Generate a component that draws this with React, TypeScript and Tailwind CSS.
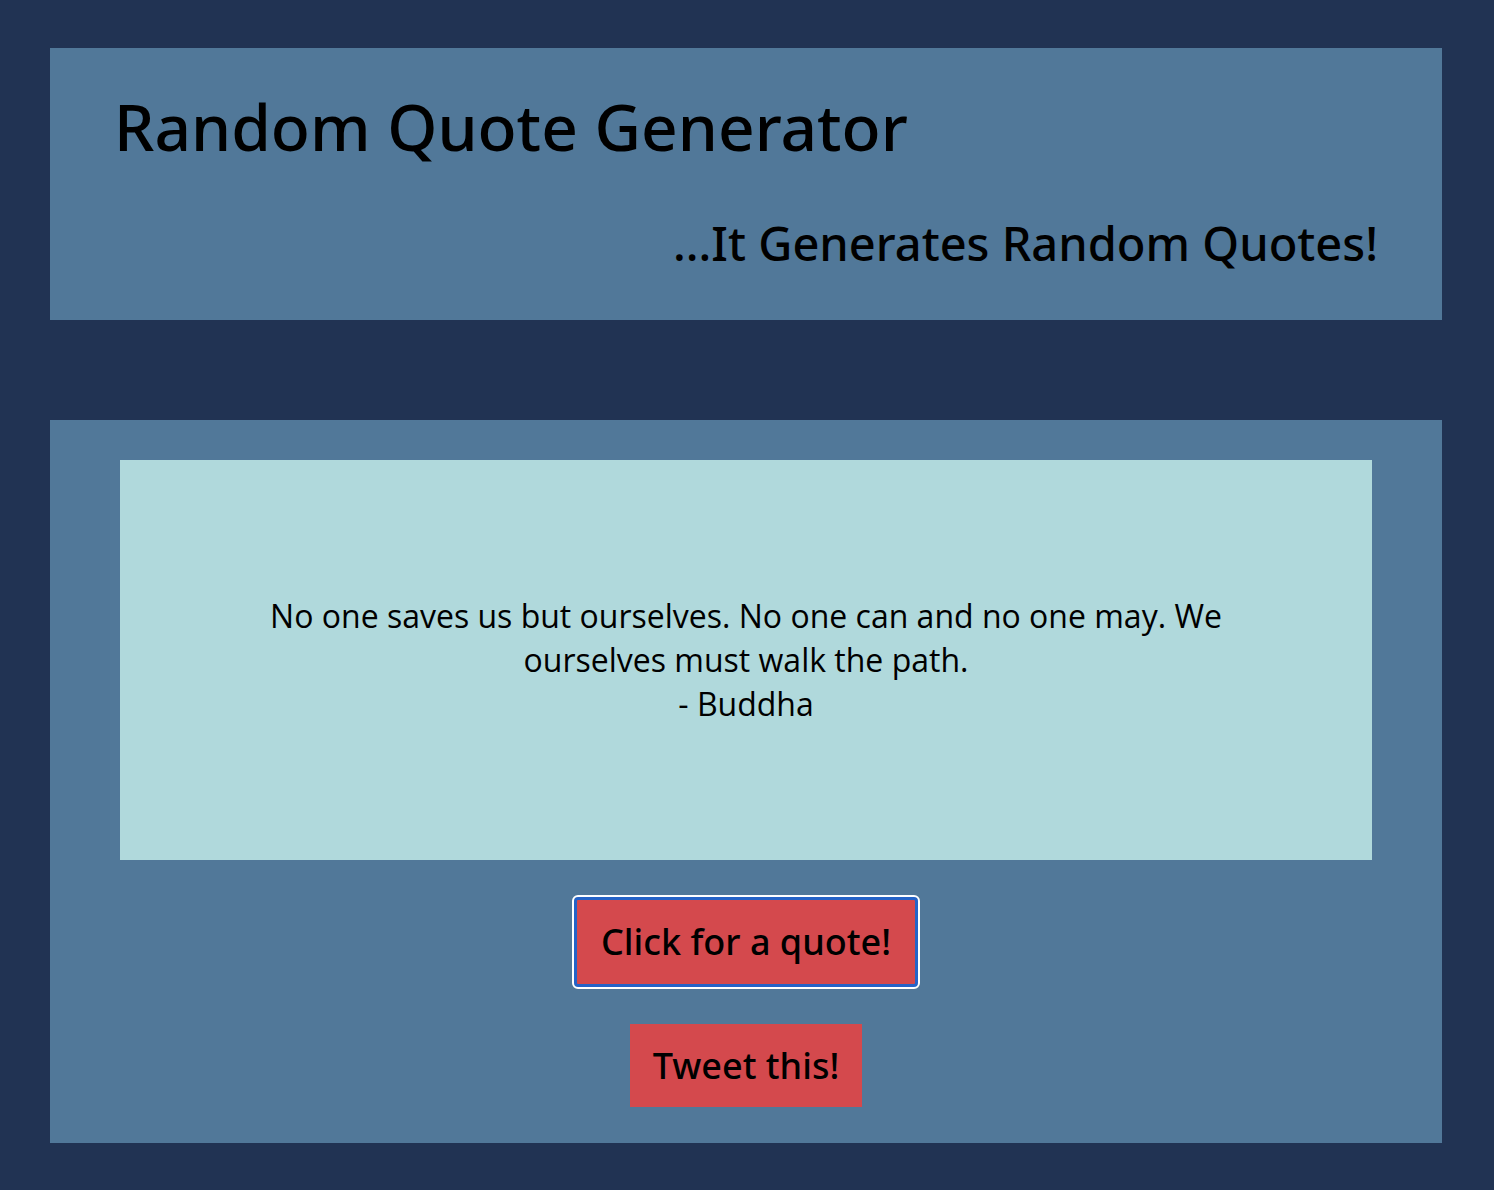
import React from "react";

const App = () => {
  return (
    <div className="min-h-screen bg-[#213353] pl-[50px] pr-[52px] pt-[48px] pb-[46px]">
      {/* Header */}
      <header
        className="bg-[#517899] h-[272px] px-[64px] pt-[28px] text-black"
        style={{ fontFamily: '"Noto Sans", sans-serif' }}
      >
        <h1 className="text-[64px] font-medium leading-[1.6]">Random Quote Generator</h1>
        <h3 className="text-right text-[47px] font-medium leading-none mt-[42px]">
          ...It Generates Random Quotes!
        </h3>
      </header>

      {/* Quote section */}
      <main className="bg-[#517899] mt-[100px] px-[70px] pt-[40px] pb-[36px] flex flex-col items-center">
        <div
          className="w-full h-[400px] bg-[#b0d9dc] flex items-center justify-center px-[140px] text-center text-[32px] leading-[44px] text-black"
          style={{ fontFamily: '"Open Sans", sans-serif' }}
        >
          <p>
            No one saves us but ourselves. No one can and no one may. We
            ourselves must walk the path.
            <br />- Buddha
          </p>
        </div>

        <button
          className="mt-[37px] bg-[#d4494d] rounded-[4px] border-[3px] border-[#2563c7] outline-2 outline-white px-[24px] h-[90px] text-[36px] font-medium text-black"
          style={{ fontFamily: '"Noto Sans", sans-serif' }}
        >
          Click for a quote!
        </button>

        <button
          className="mt-[37px] bg-[#d4494d] px-[23px] h-[83px] text-[36px] font-medium text-black"
          style={{ fontFamily: '"Noto Sans", sans-serif' }}
        >
          Tweet this!
        </button>
      </main>
    </div>
  );
};

export default App;
